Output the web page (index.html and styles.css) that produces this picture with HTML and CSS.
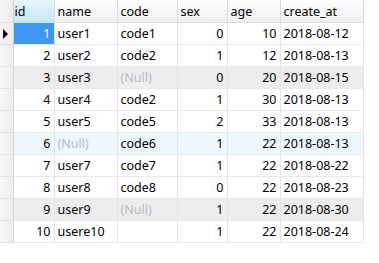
FILE: index.html
```html
<!DOCTYPE html>
<html lang="en">
<head>
<meta charset="UTF-8">
<title>user</title>
<link rel="stylesheet" href="styles.css">
</head>
<body>
<table class="grid">
  <colgroup>
    <col class="c-ind"><col class="c-id"><col class="c-name"><col class="c-code"><col class="c-sex"><col class="c-age"><col class="c-date">
  </colgroup>
  <thead>
    <tr>
      <th class="ind"></th>
      <th class="sel">id</th>
      <th>name</th>
      <th>code</th>
      <th>sex</th>
      <th>age</th>
      <th>create_at</th>
    </tr>
  </thead>
  <tbody>
    <tr class="current">
      <td class="ind"><span class="arrow"></span></td>
      <td class="num cur">1</td><td>user1</td><td>code1</td><td class="num">0</td><td class="num">10</td><td>2018-08-12</td>
    </tr>
    <tr>
      <td class="ind"></td>
      <td class="num">2</td><td>user2</td><td>code2</td><td class="num">1</td><td class="num">12</td><td>2018-08-13</td>
    </tr>
    <tr class="grey">
      <td class="ind"></td>
      <td class="num">3</td><td>user3</td><td class="null">(Null)</td><td class="num">0</td><td class="num">20</td><td>2018-08-15</td>
    </tr>
    <tr>
      <td class="ind"></td>
      <td class="num">4</td><td>user4</td><td>code2</td><td class="num">1</td><td class="num">30</td><td>2018-08-13</td>
    </tr>
    <tr>
      <td class="ind"></td>
      <td class="num">5</td><td>user5</td><td>code5</td><td class="num">2</td><td class="num">33</td><td>2018-08-13</td>
    </tr>
    <tr class="blue">
      <td class="ind"></td>
      <td class="num">6</td><td class="null">(Null)</td><td>code6</td><td class="num">1</td><td class="num">22</td><td>2018-08-13</td>
    </tr>
    <tr>
      <td class="ind"></td>
      <td class="num">7</td><td>user7</td><td>code7</td><td class="num">1</td><td class="num">22</td><td>2018-08-22</td>
    </tr>
    <tr>
      <td class="ind"></td>
      <td class="num">8</td><td>user8</td><td>code8</td><td class="num">0</td><td class="num">22</td><td>2018-08-23</td>
    </tr>
    <tr class="grey">
      <td class="ind"></td>
      <td class="num">9</td><td>user9</td><td class="null">(Null)</td><td class="num">1</td><td class="num">22</td><td>2018-08-30</td>
    </tr>
    <tr>
      <td class="ind"></td>
      <td class="num">10</td><td>usere10</td><td></td><td class="num">1</td><td class="num">22</td><td>2018-08-24</td>
    </tr>
  </tbody>
</table>
</body>
</html>
```

FILE: styles.css
```css
body {
  margin: 0;
  background: #fff;
  font-family: "Noto Sans", "Open Sans", sans-serif;
  font-size: 12.5px;
  color: #000;
}
.grid {
  border-collapse: collapse;
  table-layout: fixed;
  width: 363px;
}
.c-ind { width: 13px; }
.c-id { width: 41px; }
.c-name { width: 63px; }
.c-code { width: 60px; }
.c-sex { width: 50px; }
.c-age { width: 53px; }
.c-date { width: 83px; }
th, td {
  padding: 0 3px;
  border-right: 1px solid #e4e4e4;
  border-bottom: 1px solid #e9e9e9;
  white-space: nowrap;
  overflow: hidden;
  text-align: left;
  font-weight: normal;
}
th {
  height: 22px;
  background: linear-gradient(#fdfdfd, #eef0f2);
  border-right-color: #dcdcdc;
  border-bottom-color: #dcdcdc;
}
th.sel {
  background: linear-gradient(#e6f6fd, #c4e5f7);
  padding-left: 1px;
}
td {
  height: 21px;
}
.ind {
  padding: 0;
  background: linear-gradient(90deg, #f7f7f7, #ececec);
  border-right-color: #d4d4d4;
  border-bottom-color: #e0e0e0;
}
.num {
  text-align: right;
}
.null {
  color: #b4bccb;
}
.grey td {
  background: #ededed;
}
.blue td {
  background: #eef6ff;
}
.grey td.ind, .blue td.ind {
  background: linear-gradient(90deg, #f7f7f7, #ececec);
}
td.cur {
  background: #3d98f5;
  color: #fff;
}
.arrow {
  display: block;
  width: 0;
  height: 0;
  margin-left: 3px;
  border-top: 5px solid transparent;
  border-bottom: 5px solid transparent;
  border-left: 5px solid #000;
}
```
